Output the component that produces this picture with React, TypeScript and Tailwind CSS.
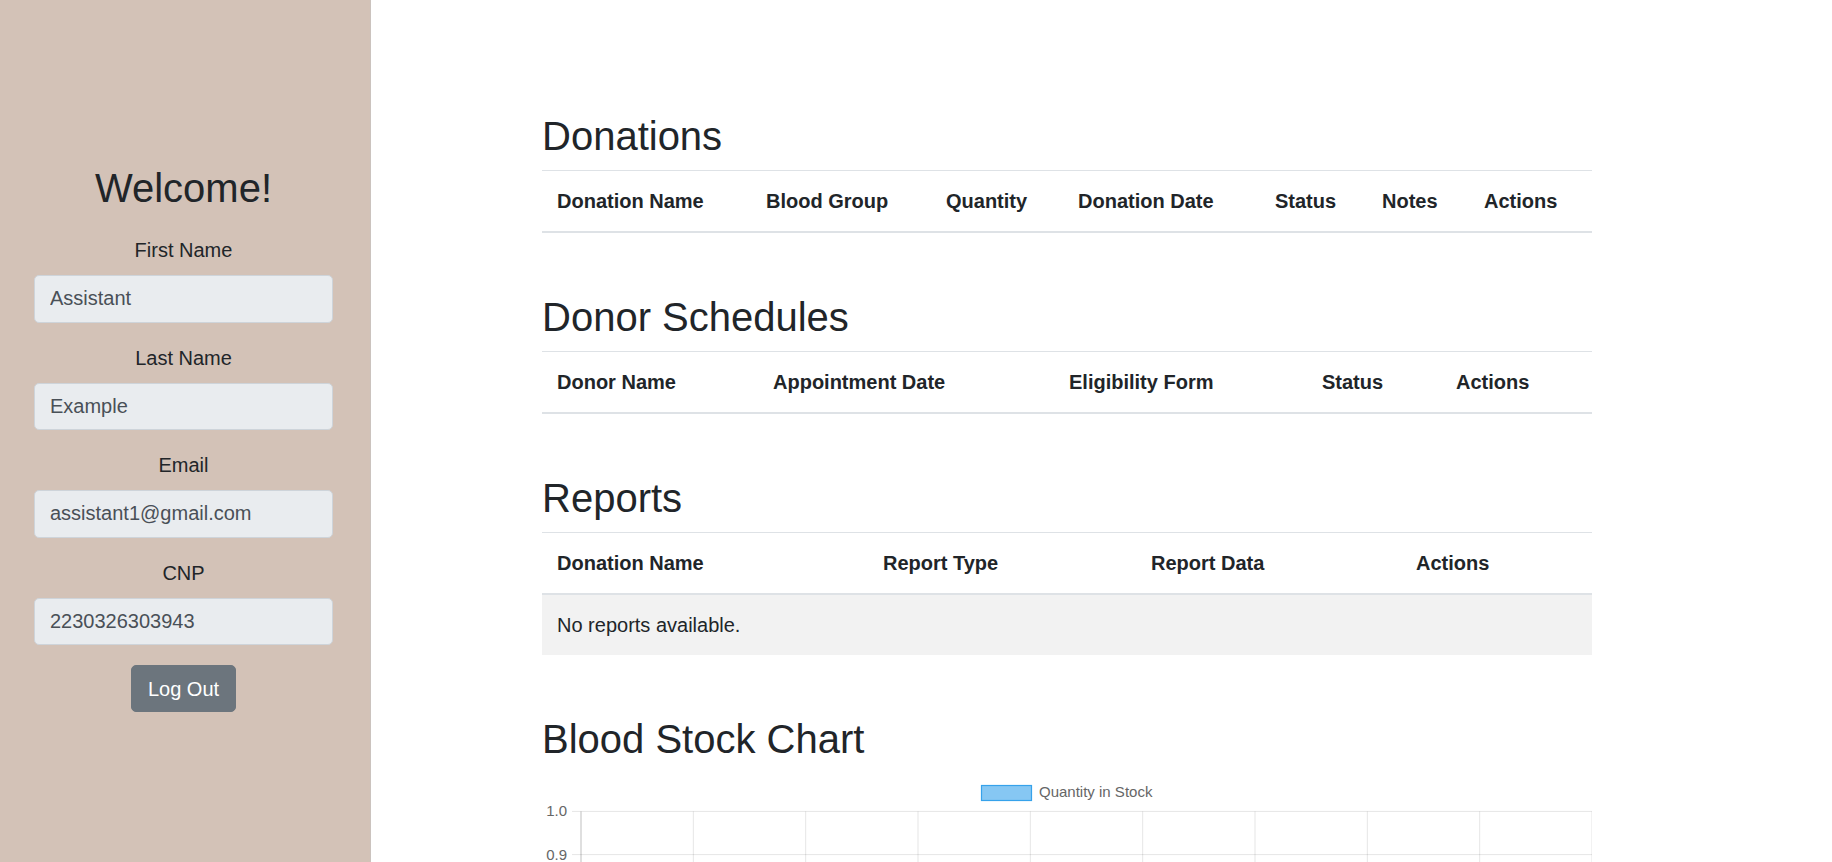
const donationCols = [
  { label: 'Donation Name', w: 209 },
  { label: 'Blood Group', w: 180 },
  { label: 'Quantity', w: 132 },
  { label: 'Donation Date', w: 197 },
  { label: 'Status', w: 107 },
  { label: 'Notes', w: 102 },
  { label: 'Actions', w: 123 },
];

const scheduleCols = [
  { label: 'Donor Name', w: 216 },
  { label: 'Appointment Date', w: 296 },
  { label: 'Eligibility Form', w: 253 },
  { label: 'Status', w: 134 },
  { label: 'Actions', w: 151 },
];

const reportCols = [
  { label: 'Donation Name', w: 326 },
  { label: 'Report Type', w: 268 },
  { label: 'Report Data', w: 265 },
  { label: 'Actions', w: 191 },
];

const profile = [
  { label: 'First Name', value: 'Assistant' },
  { label: 'Last Name', value: 'Example' },
  { label: 'Email', value: 'assistant1@gmail.com' },
  { label: 'CNP', value: '2230326303943' },
];

type Col = { label: string; w: number };

function DataTable({ cols, empty }: { cols: Col[]; empty?: string }) {
  return (
    <table className="w-[1050px] table-fixed border-collapse text-[20px] leading-[30px] text-[#212529]">
      <colgroup>
        {cols.map((c) => (
          <col key={c.label} style={{ width: c.w }} />
        ))}
      </colgroup>
      <thead>
        <tr>
          {cols.map((c) => (
            <th
              key={c.label}
              className="border-t border-b-2 border-[#dee2e6] px-[15px] py-[15px] text-left font-bold whitespace-nowrap"
            >
              {c.label}
            </th>
          ))}
        </tr>
      </thead>
      <tbody>
        {empty && (
          <tr className="bg-[#f2f2f2]">
            <td colSpan={cols.length} className="border-t border-[#dee2e6] px-[15px] py-[15px]">
              {empty}
            </td>
          </tr>
        )}
      </tbody>
    </table>
  );
}

function Section({ title, children }: { title: string; children: React.ReactNode }) {
  return (
    <section className="mb-[60px]">
      <h2 className="mb-[10px] text-[40px] leading-[48px] font-normal text-[#212529]">{title}</h2>
      {children}
    </section>
  );
}

function StockChart() {
  const left = 39;
  const top = 38.4;
  const colW = 1011 / 9;
  const rowH = 43.2;
  const ticks = ['1.0', '0.9', '0.8', '0.7', '0.6', '0.5', '0.4', '0.3', '0.2', '0.1', '0.0'];
  const bottom = top + rowH * 10;

  return (
    <svg width={1050} height={500} className="block" style={{ fontFamily: '"Liberation Sans", Arial, sans-serif' }}>
      {/* legend */}
      <rect x={439.5} y={12.5} width={50} height={15} fill="rgba(54,162,235,0.6)" stroke="rgb(54,162,235)" strokeWidth={1.2} />
      <text x={497} y={23.5} fontSize={15} fill="#666">
        Quantity in Stock
      </text>

      {/* vertical grid */}
      {Array.from({ length: 10 }).map((_, i) => (
        <line
          key={'v' + i}
          x1={left + i * colW}
          x2={left + i * colW}
          y1={top}
          y2={bottom + 12}
          stroke={i === 0 ? 'rgba(0,0,0,0.25)' : 'rgba(0,0,0,0.1)'}
          strokeWidth={1}
        />
      ))}

      {/* horizontal grid + ticks */}
      {ticks.map((t, i) => (
        <g key={t}>
          <line x1={30} x2={1050} y1={top + i * rowH} y2={top + i * rowH} stroke="rgba(0,0,0,0.1)" strokeWidth={1} />
          <text x={25} y={top + i * rowH + 5} fontSize={15} fill="#666" textAnchor="end">
            {t}
          </text>
        </g>
      ))}
    </svg>
  );
}

export default function App() {
  return (
    <div className="flex min-h-screen bg-white font-['Liberation_Sans',Arial,sans-serif] text-[#212529]">
      <aside className="w-[371px] shrink-0 border-r border-[#cbc3be] bg-[#d3c2b7] pt-[164px]">
        <div className="ml-[34px] flex w-[299px] flex-col items-center text-center">
          <h2 className="mb-[23px] text-[40px] leading-[48px] font-normal">Welcome!</h2>

          {profile.map((p) => (
            <div key={p.label} className="mb-[20px] w-full">
              <label className="mb-[10px] block text-[20px] leading-[30px]">{p.label}</label>
              <input
                disabled
                value={p.value}
                readOnly
                className="block h-[47.5px] w-full rounded-[5px] border border-[#ced4da] bg-[#e9ecef] px-[15px] text-[20px] text-[#495057]"
              />
            </div>
          ))}

          <button className="h-[47px] rounded-[5px] border border-[#6c757d] bg-[#6c757d] px-[16px] text-[20px] leading-[30px] text-white">
            Log Out
          </button>
        </div>
      </aside>

      <main className="flex-1 pt-[111.5px] pl-[171px]">
        <Section title="Donations">
          <DataTable cols={donationCols} />
        </Section>

        <Section title="Donor Schedules">
          <DataTable cols={scheduleCols} />
        </Section>

        <Section title="Reports">
          <DataTable cols={reportCols} empty="No reports available." />
        </Section>

        <section>
          <h2 className="mb-[10px] text-[40px] leading-[48px] font-normal text-[#212529]">Blood Stock Chart</h2>
          <StockChart />
        </section>
      </main>
    </div>
  );
}
